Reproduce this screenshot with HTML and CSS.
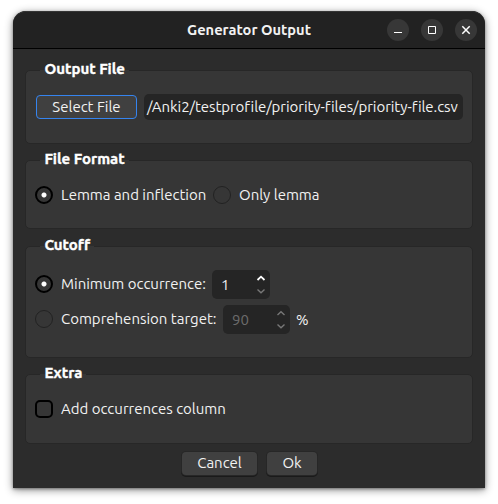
FILE: index.html
```html
<!DOCTYPE html>
<html lang="en">
<head>
<meta charset="utf-8">
<title>Generator Output</title>
<link rel="stylesheet" href="styles.css">
</head>
<body>
<main class="window">
  <header class="titlebar">
    <h1 class="title">Generator Output</h1>
    <div class="controls">
      <button class="control" aria-label="Minimize"><svg width="22" height="22" viewBox="0 0 22 22"><path d="M7 13.5h8"/></svg></button>
      <button class="control" aria-label="Maximize"><svg width="22" height="22" viewBox="0 0 22 22"><path d="M7.5 7.5h7v7h-7z"/></svg></button>
      <button class="control" aria-label="Close"><svg width="22" height="22" viewBox="0 0 22 22"><path d="M7.3 7.3l7.4 7.4M14.7 7.3l-7.4 7.4" stroke-width="1.5"/></svg></button>
    </div>
  </header>
  <div class="content">
    <section class="group output">
      <h2 class="legend">Output File</h2>
      <div class="row">
        <button class="button select">Select File</button>
        <div class="path">/Anki2/testprofile/priority-files/priority-file.csv</div>
      </div>
    </section>
    <section class="group format">
      <h2 class="legend">File Format</h2>
      <div class="row">
        <i class="radio checked"></i><span class="label lemma">Lemma and inflection</span>
        <i class="radio second"></i><span class="label only">Only lemma</span>
      </div>
    </section>
    <section class="group cutoff">
      <h2 class="legend">Cutoff</h2>
      <div class="row">
        <i class="radio checked"></i><span class="label minimum">Minimum occurrence:</span>
        <div class="spin one"><span>1</span><svg width="10" height="20" viewBox="0 0 10 20"><path class="active" d="M1.5 5L5 1.7l3.5 3.3"/><path d="M1.5 14.5L5 17.8l3.5-3.3"/></svg></div>
      </div>
      <div class="row">
        <i class="radio"></i><span class="label target">Comprehension target:</span>
        <div class="spin ninety"><span>90</span><svg width="10" height="20" viewBox="0 0 10 20"><path d="M1.5 5L5 1.7l3.5 3.3"/><path d="M1.5 14.5L5 17.8l3.5-3.3"/></svg></div>
        <span class="percent">%</span>
      </div>
    </section>
    <section class="group extra">
      <h2 class="legend">Extra</h2>
      <div class="row">
        <i class="checkbox"></i><span class="label add">Add occurrences column</span>
      </div>
    </section>
    <footer class="actions">
      <button class="button cancel">Cancel</button>
      <button class="button ok">Ok</button>
    </footer>
  </div>
</main>
</body>
</html>
```
FILE: styles.css
```css
* { box-sizing: border-box; }
body {
  margin: 0;
  padding: 11px 13px 16px;
  height: 504px;
  overflow: hidden;
  background: #fff;
  color: #f2f2f2;
  font: 15px/20px "Ubuntu", "Noto Sans", sans-serif;
  font-variant-ligatures: none;
  letter-spacing: -.01px;
  white-space: nowrap;
}
h1, h2 { margin: 0; }
button { font: inherit; letter-spacing: inherit; color: inherit; padding: 0; border: 0; }
.window {
  width: 472px;
  height: 477px;
  background: #2c2c2c;
  border-radius: 13px 13px 0 0;
  box-shadow: 0 2px 8px rgba(0, 0, 0, .45), 0 1px 3px rgba(0, 0, 0, .35);
}
.titlebar {
  display: grid;
  grid-template-columns: 1fr auto 1fr;
  align-items: center;
  height: 38px;
  padding: 0 8px;
  border-top: 1px solid #353535;
  border-bottom: 1px solid #000;
  border-radius: 13px 13px 0 0;
  background: #222;
}
.title { grid-column: 2; font-size: 14.67px; font-weight: 600; line-height: 20px; letter-spacing: 0; }
.controls { display: flex; justify-content: flex-end; gap: 12px; }
.control { width: 22px; height: 22px; border-radius: 50%; background: #373737; }
.control svg { display: block; fill: none; stroke: #fff; stroke-width: 1; }
.content { padding: 21px 12px 0; }
.group {
  border: 1px solid #272727;
  border-radius: 5px;
  background: #363636;
  padding: 0 9px;
}
/* The heading sits across the top border and interrupts it. */
.legend {
  display: block;
  width: max-content;
  height: 20px;
  margin: -12px 0 0 5px;
  padding: 0 4px 0 4.4px;
  background: linear-gradient(transparent 11px, #363636 11px);
  font-size: 15px;
  font-weight: 700;
  color: #fff;
  -webkit-text-stroke: .35px #fff;
}
.row { display: flex; align-items: center; }
.output { height: 74px; }
.output .row { margin-top: 15px; }
.button {
  height: 23px;
  border-radius: 4px;
  background: #404040;
  text-align: center;
  box-shadow: 0 0 0 1px #272727, 0 1px 0 1px #1a1a1a;
}
.select { width: 101px; height: 24px; margin-left: 1px; border: 1px solid #3584ef; box-shadow: none; }
.path { width: 319px; height: 26px; margin-left: 7px; padding: 3px 0 0 3px; border-radius: 5px; background: #252525; overflow: hidden; letter-spacing: -.06px; }
.format { height: 69px; margin-top: 16px; }
.format .row { margin-top: 16px; }
.radio, .checkbox { flex: none; width: 18px; height: 18px; border: 1px solid #222; border-radius: 50%; }
.checked { border: 2px solid #000; background: radial-gradient(circle, #fff 2px, transparent 3px); }
.checkbox { border: 2px solid #000; border-radius: 5px; }
.label { flex: none; margin-left: 8px; }
.lemma { width: 144px; }
.second { margin-left: 8px; }
.cutoff { height: 112px; margin-top: 17px; }
.cutoff .row { height: 29px; margin-top: 15px; }
.cutoff .row + .row { margin-top: 6px; }
.cutoff .radio, .cutoff .label { margin-bottom: 2px; }
.spin { display: flex; justify-content: space-between; align-items: center; height: 29px; padding: 1px 4px 0 9px; border-radius: 5px; background: #252525; }
.spin svg { fill: none; stroke: #777; stroke-width: 1.4; }
.spin .active { stroke: #fff; stroke-width: 1.8; }
.minimum { width: 151px; }
.target { width: 162px; }
.one { width: 58px; }
.ninety { width: 67px; color: #6c6c6c; }
.percent { margin-left: 6px; }
.extra { height: 70px; margin-top: 16px; }
.extra .row { margin-top: 16px; }
.actions { display: flex; gap: 10px; margin: 8px 0 0 157px; }
.cancel { width: 75px; padding-bottom: 2px; }
.ok { width: 50px; padding-bottom: 2px; }
```
